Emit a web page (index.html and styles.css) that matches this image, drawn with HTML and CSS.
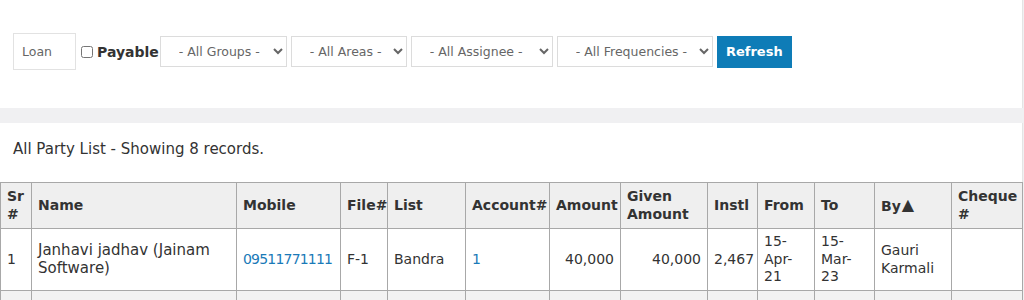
FILE: index.html
```html
<!doctype html>
<html>
<head>
  <meta charset="utf-8">
  <title>All Party List</title>
  <link rel="stylesheet" href="styles.css">
</head>
<body>
  <div class="panel filters">
    <input class="loan" type="text" placeholder="Loan">
    <label class="payable"><input type="checkbox"> Payable</label>
    <select class="sel groups"><option>- All Groups -</option></select>
    <select class="sel areas"><option>- All Areas -</option></select>
    <select class="sel assignee"><option>- All Assignee -</option></select>
    <select class="sel freq"><option>- All Frequencies -</option></select>
    <button class="refresh">Refresh</button>
  </div>
  <div class="panel list">
    <p class="caption">All Party List - Showing 8 records.</p>
    <table class="grid">
      <colgroup>
        <col class="c-sr"><col class="c-name"><col class="c-mobile"><col class="c-file">
        <col class="c-list"><col class="c-acc"><col class="c-amt"><col class="c-given">
        <col class="c-instl"><col class="c-from"><col class="c-to"><col class="c-by"><col class="c-cheque">
      </colgroup>
      <thead>
        <tr>
          <th>Sr #</th>
          <th>Name</th>
          <th>Mobile</th>
          <th>File#</th>
          <th>List</th>
          <th>Account#</th>
          <th>Amount</th>
          <th>Given Amount</th>
          <th>Instl</th>
          <th>From</th>
          <th>To</th>
          <th>By<span class="sort">&#9650;</span></th>
          <th>Cheque #</th>
        </tr>
      </thead>
      <tbody>
        <tr>
          <td>1</td>
          <td class="name">Janhavi jadhav (Jainam Software)</td>
          <td><a class="phone" href="#">09511771111</a></td>
          <td>F-1</td>
          <td>Bandra</td>
          <td><a href="#">1</a></td>
          <td class="num">40,000</td>
          <td class="num">40,000</td>
          <td>2,467</td>
          <td>15-Apr-21</td>
          <td>15-Mar-23</td>
          <td>Gauri Karmali</td>
          <td></td>
        </tr>
        <tr class="alt">
          <td>&nbsp;</td><td></td><td></td><td></td><td></td><td></td><td></td>
          <td></td><td></td><td></td><td></td><td></td><td></td>
        </tr>
      </tbody>
    </table>
  </div>
</body>
</html>
```

FILE: styles.css
```css
body {
  margin: 0;
  width: 1023px;
  background: #f0f0f2;
  font-family: "DejaVu Sans", sans-serif;
  font-size: 14px;
  color: #333;
}

.panel {
  background: white;
  border-right: 1px solid #e4e4e4;
}

.filters {
  display: flex;
  align-items: center;
  height: 108px;
  padding: 0 0 5px 13px;
  box-sizing: border-box;
  margin-bottom: 15px;
}

.loan {
  width: 63px;
  height: 37px;
  box-sizing: border-box;
  border: 1px solid #e2e2e2;
  padding: 0 8px;
  font: 12.5px "DejaVu Sans", sans-serif;
  color: #555;
}

.loan::placeholder {
  color: #666;
}

.payable {
  display: flex;
  align-items: center;
  margin: 0 1px 0 4px;
  font-size: 14px;
  font-weight: bold;
  color: #333;
}

.payable input {
  width: 12px;
  height: 12px;
  margin: 0 4px 0 1px;
}

.sel {
  height: 31px;
  margin-right: 4px;
  border: 1px solid #dcdcdc;
  border-radius: 0;
  background: white;
  font: 12.5px "DejaVu Sans", sans-serif;
  color: #666;
  padding: 0 4px 0 14px;
}

.groups { width: 127px; }
.areas { width: 116px; }
.assignee { width: 142px; }
.freq { width: 156px; }

.refresh {
  width: 75px;
  height: 32px;
  border: none;
  background: #0e7cb7;
  color: white;
  font: bold 13px "DejaVu Sans", sans-serif;
}

.list {
  padding-top: 1px;
  min-height: 200px;
}

.caption {
  margin: 16px 13px 24px;
  font-size: 15px;
  color: #333;
}

.grid {
  width: 1023px;
  table-layout: fixed;
  border-collapse: collapse;
  font-size: 14px;
}

.grid th,
.grid td {
  border: 1px solid #a8a8a8;
  padding: 4px 6px;
  text-align: left;
  vertical-align: middle;
  line-height: 17.5px;
}

.grid th {
  background: #efefef;
  font-weight: bold;
  color: #333;
  height: 37px;
}

.grid td {
  height: 53px;
}

.grid .name {
  font-size: 15px;
}

.grid .num {
  text-align: right;
}

.grid a {
  color: #1a7ab8;
  text-decoration: none;
}

.grid .phone {
  letter-spacing: -0.8px;
}

.grid .alt td {
  background: #f2f2f2;
}

.sort {
  font-size: 16px;
  margin-left: 1px;
  vertical-align: 1px;
}

.c-sr { width: 31px; }
.c-name { width: 205px; }
.c-mobile { width: 104px; }
.c-file { width: 47px; }
.c-list { width: 78px; }
.c-acc { width: 84px; }
.c-amt { width: 71px; }
.c-given { width: 87px; }
.c-instl { width: 50px; }
.c-from { width: 57px; }
.c-to { width: 60px; }
.c-by { width: 77px; }
.c-cheque { width: 71px; }
```
